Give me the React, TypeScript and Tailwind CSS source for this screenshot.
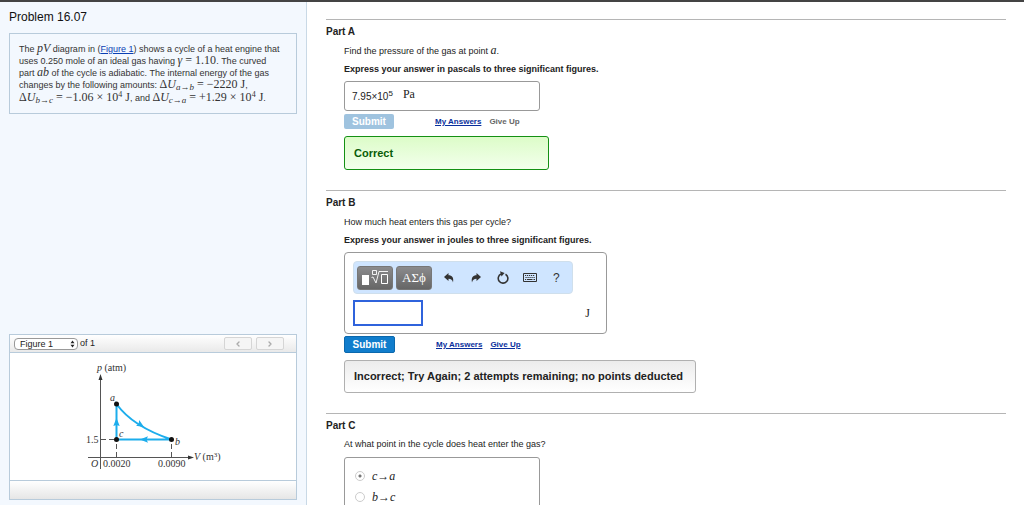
import { useState } from 'react';
import type { ReactNode } from 'react';
import { ChevronLeft, ChevronRight } from 'lucide-react';

const linkStyle = 'text-[8px] font-bold text-[#0a2f9c] underline';

function MathText({ children }: { children: ReactNode }) {
  return <span className="font-['Liberation_Serif',serif] text-[12px] leading-[0]">{children}</span>;
}

function Sub({ children }: { children: ReactNode }) {
  return <sub className="text-[9px] italic">{children}</sub>;
}

function Sup({ children }: { children: ReactNode }) {
  return <sup className="text-[8px]">{children}</sup>;
}

function ProblemText() {
  return (
    <div className="border border-[#b8cbdb] px-[9px] pt-[9px] pb-[9px] text-[9px] leading-[12px] whitespace-nowrap text-[#333]">
      <p>
        The <MathText><i>pV</i></MathText> diagram in (
        <a href="#figure" className="text-[#0a3fb4] underline">Figure 1</a>) shows a cycle of a heat engine that
      </p>
      <p>
        uses 0.250 mole of an ideal gas having <MathText><i>γ</i> = 1.10</MathText>. The curved
      </p>
      <p>
        part <MathText><i>ab</i></MathText> of the cycle is adiabatic. The internal energy of the gas
      </p>
      <p>
        changes by the following amounts:{' '}
        <MathText>Δ<i>U</i><Sub>a→b</Sub> = −2220 J</MathText>,
      </p>
      <p className="mt-px">
        <MathText>Δ<i>U</i><Sub>b→c</Sub> = −1.06 × 10<Sup>4</Sup> J</MathText>, and{' '}
        <MathText>Δ<i>U</i><Sub>c→a</Sub> = +1.29 × 10<Sup>4</Sup> J</MathText>.
      </p>
    </div>
  );
}

function PVDiagram() {
  return (
    <svg viewBox="10 353 286 127" className="mx-auto block h-[127px] w-[286px]" role="img" aria-label="pV diagram">
      <g stroke="#555" strokeWidth="1" fill="none">
        <path d="M100.5 379V469M88 457.5H188" />
        <path d="M101 439.5H116" strokeDasharray="5 3" />
        <path d="M116.5 444V457M171.5 444V457" strokeDasharray="5 3" />
      </g>
      <path d="M100.5 374l-2 6h4zM194 457.5l-6-2v4z" fill="#333" />
      <g stroke="#1cadec" strokeWidth="2" fill="none">
        <path d="M116.500 404C128 420 146 431 171.500 439.500H116.500Z" />
      </g>
      <g fill="#1cadec">
        <path d="M116.500 418l-3.200 8 3.200-1 3.200 1zM140 439.500l8-3.200-1.500 3.200 1.500 3.200zM144 427l-8-1.300 2.600-1.800.6-3.900z" />
      </g>
      <g fill="#111">
        <circle cx="116.500" cy="404" r="2.500" />
        <circle cx="116.500" cy="439.500" r="2.500" />
        <circle cx="171.500" cy="439.500" r="2.500" />
      </g>
      <g fill="#333" fontFamily="Liberation Serif, serif" fontSize="10">
        <text x="97" y="371"><tspan fontStyle="italic">p</tspan> (atm)</text>
        <text x="110" y="401" fontStyle="italic">a</text>
        <text x="119" y="437" fontStyle="italic">c</text>
        <text x="175" y="445" fontStyle="italic">b</text>
        <text x="86" y="443">1.5</text>
        <text x="91" y="467" fontStyle="italic">O</text>
        <text x="103" y="467">0.0020</text>
        <text x="158" y="467">0.0090</text>
        <text x="194" y="460">
          <tspan fontStyle="italic">V</tspan> (m<tspan fontSize="7" dy="-3">3</tspan><tspan dy="3">)</tspan>
        </text>
      </g>
    </svg>
  );
}

function FigurePanel() {
  const pager =
    'flex h-[13px] w-7 items-center justify-center rounded-xs border border-[#d5d5d5] bg-[#f5f5f5] text-[#aaa]';
  return (
    <section id="figure" className="mt-auto border border-[#b8cbdb] bg-white">
      <div className="flex h-[18px] items-center border-b border-[#b8cbdb] bg-gradient-to-b from-white to-[#e9e9e9] px-1 text-[9px] text-[#222]">
        <div className="relative">
          <select
            aria-label="Figure"
            className="block h-3 w-16 appearance-none rounded-sm border border-[#999] bg-white pl-[5px] text-[9px] leading-[10px]"
          >
            <option>Figure 1</option>
          </select>
          <svg viewBox="0 0 5 8" className="pointer-events-none absolute top-[2px] right-[3px] h-2 w-[5px]" aria-hidden="true">
            <path d="M2.500 0.500L4.500 3.200H.5zM2.500 7.500L4.500 4.800H.5z" fill="#222" />
          </svg>
        </div>
        <span className="ml-[2px]">of 1</span>
        <div className="ml-auto flex gap-1 pr-2">
          <button type="button" aria-label="Previous figure" className={pager}><ChevronLeft size={8} strokeWidth={4} /></button>
          <button type="button" aria-label="Next figure" className={pager}><ChevronRight size={8} strokeWidth={4} /></button>
        </div>
      </div>
      <PVDiagram />
      <div className="h-[19px] border-t border-[#b8cbdb] bg-gradient-to-b from-white to-[#e6e6e6]" />
    </section>
  );
}

function Part({ title, className, children }: { title: string; className: string; children: ReactNode }) {
  return (
    <section className={`border-t border-[#b5b5b5] text-[9px] text-[#222] ${className}`}>
      <h2 className="pt-[6px] text-[10px] leading-[12px] font-bold">{title}</h2>
      <div className="pl-[18px]">{children}</div>
    </section>
  );
}

function Toolbar() {
  const key =
    "flex h-6 w-9 items-center justify-center rounded-[3px] border border-[#777] bg-gradient-to-b from-[#8b8b8d] to-[#666] font-['Liberation_Serif',serif] text-[13px] text-white";
  return (
    <div className="flex h-[33px] w-[220px] items-center rounded-[4px] border border-[#cfdfec] bg-[#cfe5ff] pl-[3px] text-[#333]">
      <button type="button" aria-label="Templates" className={key}>
        <svg viewBox="0 0 28 18" className="h-[18px] w-7" fill="none" stroke="#fff" aria-hidden="true">
          <rect x="1" y="6" width="7" height="10" fill="#fff" stroke="none" />
          <path d="M11.500 1.500h4v4h-4zM10.500 8.500l1.500-.5 3 6 3-11.500h9" strokeWidth=".9" />
          <path d="M20.500 5.500h6v9h-6z" />
        </svg>
      </button>
      <button type="button" aria-label="Symbols" className={`${key} ml-[3px]`}>ΑΣϕ</button>
      <button type="button" aria-label="Undo" className="ml-3">
        <svg viewBox="0 0 10 10" className="size-[10px]" aria-hidden="true">
          <path d="M0 4L4.500 0v2.300C8 2.300 10 4.500 9 9.500 8.500 7 7 5.800 4.500 5.800V8z" fill="currentColor" />
        </svg>
      </button>
      <button type="button" aria-label="Redo" className="ml-[17px]">
        <svg viewBox="0 0 10 10" className="size-[10px]" aria-hidden="true">
          <path d="M10 4L5.500 0v2.300C2 2.300 0 4.500 1 9.500 1.500 7 3 5.800 5.500 5.800V8z" fill="currentColor" />
        </svg>
      </button>
      <button type="button" aria-label="Reset" className="ml-4">
        <svg viewBox="0 0 12 13" className="h-[13px] w-3" aria-hidden="true">
          <path d="M8.500 3.200A4.800 4.800 0 1 1 4 3" fill="none" stroke="currentColor" strokeWidth="1.600" />
          <path d="M3 .3l4.600 1.700L4.500 5.600z" fill="currentColor" />
        </svg>
      </button>
      <button type="button" aria-label="Keyboard" className="ml-[14px]">
        <svg viewBox="0 0 14 9" className="h-[9px] w-[14px]" fill="none" stroke="currentColor" aria-hidden="true">
          <path d="M.5.5h13v8H.5z" />
          <path d="M2 2.500h10M2.500 4.500h9.500" strokeDasharray="1.200 .8" />
          <path d="M2 6.500h1.200M4 6.500h5.500M10.500 6.500H12" />
        </svg>
      </button>
      <button type="button" aria-label="Help" className="ml-4 text-[12px]">?</button>
    </div>
  );
}

export default function App() {
  const [answer, setAnswer] = useState('');
  const [path, setPath] = useState('c→a');

  return (
    <div className="flex h-screen overflow-hidden border-t-2 border-[#444] bg-white font-['Liberation_Sans',Arial,sans-serif]">
      <aside className="flex w-[307px] shrink-0 flex-col border-r border-[#c9d9e6] bg-[#f3f8fe] pt-[7px] pr-[9px] pb-[5px] pl-[9px]">
        <h1 className="mb-2 text-[12px] leading-4 text-[#111]">Problem 16.07</h1>
        <ProblemText />
        <FigurePanel />
      </aside>

      <main className="min-w-0 flex-1 pt-[17px] pr-[18px] pl-[19px]">
        <Part title="Part A" className="h-[171px]">
          <p className="mt-[7px] leading-[12px]">Find the pressure of the gas at point <MathText><i>a</i></MathText>.</p>
          <p className="mt-[6px] leading-[12px] font-bold">Express your answer in pascals to three significant figures.</p>
          <div className="mt-[6px] flex h-[30px] w-[196px] items-center rounded-[3px] border border-[#999] px-[7px]">
            <span className="text-[10px]">7.95×10<Sup>5</Sup></span>
            <span className="ml-[10px]"><MathText>Pa</MathText></span>
          </div>
          <div className="mt-[3px] flex items-center">
            <button type="button" disabled className="h-[15px] w-[50px] rounded-xs bg-[#9fc3df] text-[10px] leading-[15px] font-bold text-white">Submit</button>
            <a href="#answers" className={`ml-[41px] ${linkStyle}`}>My Answers</a>
            <span className="ml-2 text-[8px] font-bold text-[#666]">Give Up</span>
          </div>
          <div className="mt-[7px] flex h-[34px] w-[205px] items-center rounded-[3px] border border-[#149014] bg-gradient-to-b from-[#dcfcc8] to-[#f3ffec] px-[9px] text-[11px] font-bold text-[#085c08]">
            Correct
          </div>
        </Part>

        <Part title="Part B" className="h-[223px]">
          <p className="mt-[7px] leading-[12px]">How much heat enters this gas per cycle?</p>
          <p className="mt-[6px] leading-[12px] font-bold">Express your answer in joules to three significant figures.</p>
          <div className="mt-[6px] h-[82px] w-[263px] rounded-[4px] border border-[#999] p-2">
            <Toolbar />
            <div className="mt-[6px] flex items-center justify-between pr-2">
              <input
                aria-label="Heat in joules"
                value={answer}
                onChange={(e) => setAnswer(e.target.value)}
                className="h-[26px] w-[70px] border-2 border-[#2f63dc] bg-white px-1 text-[12px] outline-none"
              />
              <MathText>J</MathText>
            </div>
          </div>
          <div className="mt-[2px] flex items-center">
            <button type="button" className="h-[17px] w-[51px] rounded-xs border border-[#0b68ad] bg-[#117dcc] text-[10px] leading-[15px] font-bold text-white">Submit</button>
            <a href="#answers" className={`ml-[41px] ${linkStyle}`}>My Answers</a>
            <a href="#give-up" className={`ml-2 ${linkStyle}`}>Give Up</a>
          </div>
          <div className="mt-[7px] flex h-[33px] w-[352px] items-center rounded-[3px] border border-[#b0b0b0] bg-gradient-to-b from-[#ececec] to-white px-[9px] text-[11px] font-bold whitespace-nowrap text-[#222]">
            Incorrect; Try Again; 2 attempts remaining; no points deducted
          </div>
        </Part>

        <Part title="Part C" className="">
          <p className="mt-[6px] leading-[12px]">At what point in the cycle does heat enter the gas?</p>
          <div className="mt-[7px] flex w-[196px] flex-col gap-[9px] rounded-[3px] border border-[#999] px-[10px] pt-3 pb-4">
            {['c→a', 'b→c'].map((option) => (
              <label key={option} className="flex h-3 items-center gap-[7px]">
                <input
                  type="radio"
                  name="path"
                  checked={path === option}
                  onChange={() => setPath(option)}
                  className="size-[10px] appearance-none rounded-full border border-[#ccc] bg-white checked:bg-[radial-gradient(circle,#777_1px,white_2px)]"
                />
                <MathText><i>{option}</i></MathText>
              </label>
            ))}
          </div>
        </Part>
      </main>
    </div>
  );
}
